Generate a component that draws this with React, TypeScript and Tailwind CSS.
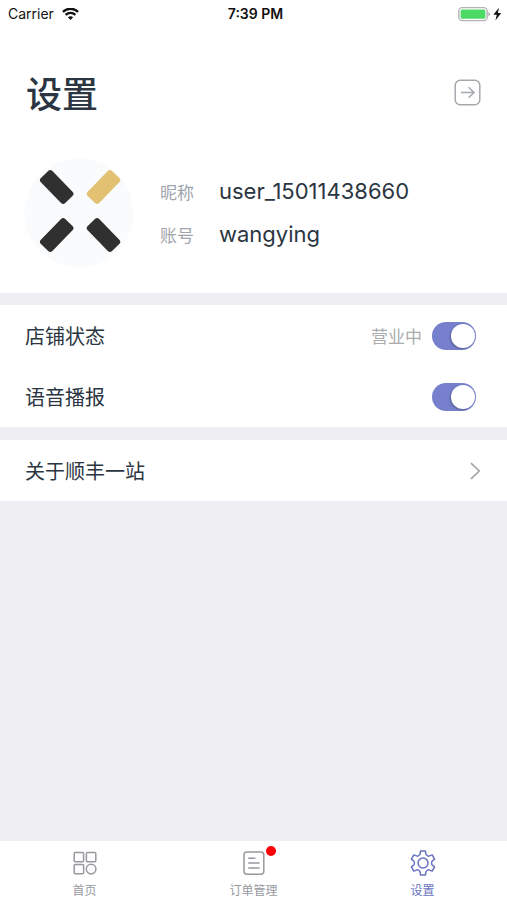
import type { ReactNode } from "react";

function StatusBar() {
  return (
    <div className="grid h-7 grid-cols-3 items-center pr-1 pl-2 font-[Inter,sans-serif] text-[#111111]">
      <div className="flex items-center gap-2 text-sm">
        <span>Carrier</span>
        <svg width="17" height="13" viewBox="0 0 17 13" fill="none" stroke="currentColor" strokeWidth="2.3" aria-hidden="true">
          <path d="M0.9 3.9 C5 -0.3 12 -0.3 16.1 3.9" />
          <path d="M3.6 6.9 C6.3 4.2 10.7 4.2 13.4 6.9" />
          <path d="M8.5 11.9 L5.9 9.3 C7.3 7.9 9.7 7.9 11.1 9.3 Z" fill="currentColor" stroke="none" />
        </svg>
      </div>
      <div className="text-center text-sm font-semibold">7:39 PM</div>
      <div className="flex items-center justify-end">
        <svg width="45" height="15" viewBox="0 0 45 15" aria-hidden="true">
          <rect x="0.8" y="0.6" width="28.4" height="13" rx="3.5" fill="#fff" stroke="#b4b4b6" strokeWidth="1.4" />
          <rect x="2.6" y="2.4" width="24.8" height="9.4" rx="1.6" fill="#4cd964" />
          <path d="M30.4 5 C32.4 5.7 32.4 8.7 30.4 9.4 Z" fill="#a9a9ab" />
          <path d="M41 0.8 L35.4 7.8 H38.8 L37.4 13.4 L43.2 6 H39.8 Z" fill="#111" />
        </svg>
      </div>
    </div>
  );
}

function Avatar() {
  return (
    <svg className="shrink-0" width="110" height="110" viewBox="0 0 110 110" role="img" aria-label="头像">
      <circle cx="55" cy="55" r="54.5" fill="#f9fbfd" />
      <g fill="#303030">
        <rect x="-17.5" y="-8" width="35" height="16" rx="3" transform="translate(32.7 29) rotate(46)" />
        <rect x="-17.5" y="-8" width="35" height="16" rx="3" transform="translate(32.7 77) rotate(-46)" />
        <rect x="-17.5" y="-8" width="35" height="16" rx="3" transform="translate(79.5 77) rotate(46)" />
      </g>
      <rect x="-17.5" y="-8" width="35" height="16" rx="3" transform="translate(79.5 29) rotate(-46)" fill="#e3c172" />
    </svg>
  );
}

function Switch({ id }: { id: string }) {
  return (
    <input
      id={id}
      type="checkbox"
      role="switch"
      defaultChecked
      className="flex h-7 w-11 cursor-pointer appearance-none items-center rounded-full bg-[#c9c9cf] px-px before:size-6 before:rounded-full before:bg-white before:shadow-[-1px_1px_2px_rgba(0,0,0,0.25)] checked:justify-end checked:bg-[#7780cd]"
    />
  );
}

function SettingRow({ id, label, status }: { id: string; label: string; status?: string }) {
  return (
    <div className="flex h-[61px] items-center pr-[31px] pl-[25px]">
      <label htmlFor={id} className="flex-1 text-xl">
        {label}
      </label>
      {status && <span className="mr-2.5 text-[17px] text-[#a9abad]">{status}</span>}
      <Switch id={id} />
    </div>
  );
}

function Tab({ label, active, badge, children }: { label: string; active?: boolean; badge?: boolean; children: ReactNode }) {
  return (
    <a
      href="#"
      aria-current={active ? "page" : undefined}
      className={`flex flex-1 flex-col items-center gap-1.5 pt-[9px] text-xs ${active ? "text-[#6971c2]" : "text-[#97999f]"}`}
    >
      <span className="relative flex size-[26px] items-center justify-center">
        {children}
        {badge && <span className="absolute -top-1 -right-[9px] size-2.5 rounded-full bg-[#fb0007]" />}
      </span>
      <span>{label}</span>
    </a>
  );
}

export default function App() {
  return (
    <div className="flex min-h-screen flex-col bg-[#eeeef3] font-['Noto_Sans_CJK_SC',sans-serif] text-[#2b3642]">
      <header className="bg-white pb-[25px]">
        <StatusBar />
        <div className="flex items-center justify-between px-[26px] pt-9">
          <h1 className="text-4xl leading-14 font-medium">设置</h1>
          <button type="button" aria-label="退出登录" className="cursor-pointer text-[#a5a9ae]">
            <svg width="27" height="27" viewBox="0 0 27 27" fill="none" stroke="currentColor" strokeWidth="1.5">
              <rect x="1.2" y="1.2" width="24.6" height="24.6" rx="5" />
              <path d="M7 13.5 H20 M14.6 8.2 L20 13.5 L14.6 18.8" />
            </svg>
          </button>
        </div>
        <div className="flex items-center pt-[38px] pl-6">
          <Avatar />
          <dl className="ml-[26px] grid grid-cols-[59px_1fr] items-center leading-[43px]">
            <dt className="text-[17px] text-[#a0a5ad]">昵称</dt>
            <dd className="font-[Inter,sans-serif] text-[22px]">user_15011438660</dd>
            <dt className="text-[17px] text-[#a0a5ad]">账号</dt>
            <dd className="font-[Inter,sans-serif] text-[22px]">wangying</dd>
          </dl>
        </div>
      </header>

      <main className="flex-1">
        <section className="mt-3 bg-white">
          <SettingRow id="shop-status" label="店铺状态" status="营业中" />
          <SettingRow id="voice" label="语音播报" />
        </section>
        <a href="#" className="mt-[13px] flex h-[61px] items-center justify-between bg-white pr-[26px] pl-[25px] text-xl">
          关于顺丰一站
          <svg width="12" height="18" viewBox="0 0 12 18" fill="none" stroke="#a3a3a5" strokeWidth="1.6" aria-hidden="true">
            <path d="M2 1.2 L10.2 9 L2 16.8" />
          </svg>
        </a>
      </main>

      <nav className="flex h-[59px] bg-white">
        <Tab label="首页">
          <svg width="26" height="26" viewBox="0 0 26 26" fill="none" stroke="currentColor" strokeWidth="1.5" aria-hidden="true">
            <rect x="2.2" y="2.4" width="9.4" height="9.4" rx="1" />
            <rect x="14.4" y="2.4" width="9.4" height="9.4" rx="1" />
            <rect x="2.2" y="14.4" width="9.4" height="9.4" rx="1" />
            <circle cx="19.1" cy="19.1" r="4.8" />
          </svg>
        </Tab>
        <Tab label="订单管理" badge>
          <svg width="26" height="26" viewBox="0 0 26 26" fill="none" stroke="currentColor" strokeWidth="1.5" aria-hidden="true">
            <rect x="3" y="2" width="19.8" height="22.2" rx="3" />
            <path d="M7.2 8.2 H14.4 M7.2 13 H18.6 M7.2 18 H18.6" />
          </svg>
        </Tab>
        <Tab label="设置" active>
          <svg width="26" height="26" viewBox="-13 -13 26 26" fill="none" stroke="currentColor" strokeWidth="1.5" strokeLinejoin="round" aria-hidden="true">
            <path d="M-2.4 -12 H2.4 L3 -8.6 Q4.6 -6.6 5.95 -6.9 L9.19 -8.08 L11.59 -3.92 L8.95 -1.7 Q8 0 8.95 1.7 L11.59 3.92 L9.19 8.08 L5.95 6.9 Q4.6 6.6 3 8.6 L2.4 12 H-2.4 L-3 8.6 Q-4.6 6.6 -5.95 6.9 L-9.19 8.08 L-11.59 3.92 L-8.95 1.7 Q-8 0 -8.95 -1.7 L-11.59 -3.92 L-9.19 -8.08 L-5.95 -6.9 Q-4.6 -6.6 -3 -8.6 Z" />
            <circle r="5" />
          </svg>
        </Tab>
      </nav>
    </div>
  );
}
